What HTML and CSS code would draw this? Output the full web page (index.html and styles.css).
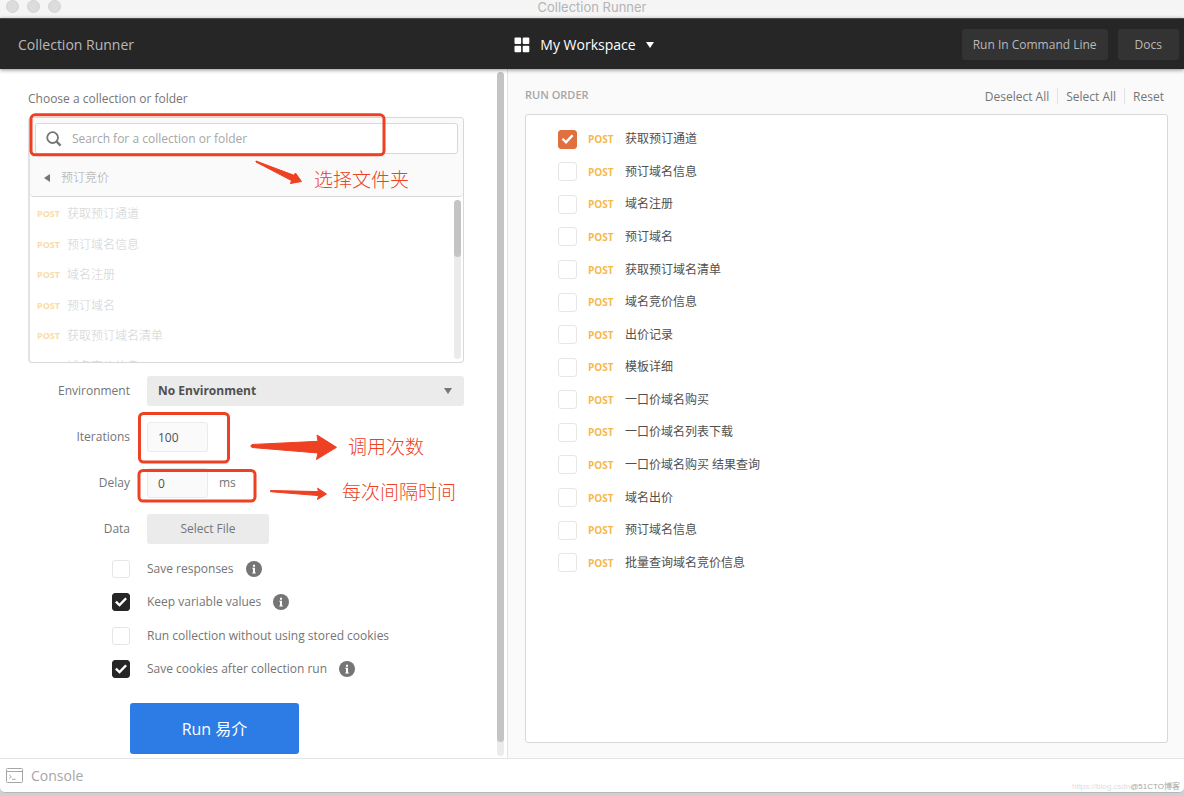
FILE: index.html
```html
<!DOCTYPE html>
<html lang="zh-CN">
<head>
<meta charset="utf-8">
<title>Collection Runner</title>
<link rel="stylesheet" href="styles.css">
</head>
<body>
<div class="window">
  <div class="titlebar">
    <div class="lights"><i></i><i></i><i></i></div>
    <span>Collection Runner</span>
  </div>
  <header class="header">
    <h1 class="header-title">Collection Runner</h1>
    <button class="workspace" type="button">
      <svg width="16" height="16" viewBox="0 0 16 16" fill="#fff"><rect x="0.5" y="0.5" width="6.6" height="6.6" rx="1"/><rect x="8.7" y="0.5" width="6.6" height="6.6" rx="1"/><rect x="0.5" y="8.7" width="6.6" height="6.6" rx="1"/><rect x="8.7" y="8.7" width="6.6" height="6.6" rx="1"/></svg>
      <span>My Workspace</span>
      <svg width="8" height="6" viewBox="0 0 8 6" fill="#fff"><path d="M0 0h8L4 6z"/></svg>
    </button>
    <div class="header-actions">
      <button class="dark-btn" type="button">Run In Command Line</button>
      <button class="dark-btn docs" type="button">Docs</button>
    </div>
  </header>

  <main class="main">
    <section class="config">
      <form class="config-body">
        <label class="choose" for="search">Choose a collection or folder</label>
        <div class="picker">
          <div class="picker-head">
            <div class="search">
              <svg width="16" height="16" viewBox="0 0 16 16" fill="none" stroke="#757575" stroke-width="1.8"><circle cx="6.6" cy="6.6" r="5.4"/><path d="M10.6 10.6 14.6 14.6" stroke-width="2.2"/></svg>
              <input id="search" type="text" placeholder="Search for a collection or folder">
            </div>
            <button class="crumb" type="button">
              <svg width="6" height="8" viewBox="0 0 6 8" fill="#757575"><path d="M6 0v8L0 4z"/></svg>
              <span>预订竞价</span>
            </button>
          </div>
          <div class="picker-list">
            <ul class="requests">
              <li><b>POST</b>获取预订通道</li>
              <li><b>POST</b>预订域名信息</li>
              <li><b>POST</b>域名注册</li>
              <li><b>POST</b>预订域名</li>
              <li><b>POST</b>获取预订域名清单</li>
              <li><b>POST</b>域名竞价信息</li>
            </ul>
            <div class="track inner"><div class="thumb"></div></div>
          </div>
        </div>

        <div class="fields">
          <label for="env">Environment</label>
          <div class="select">
            <select id="env"><option>No Environment</option></select>
            <svg width="8" height="6" viewBox="0 0 8 6" fill="#757575"><path d="M0 0h8L4 6z"/></svg>
          </div>
          <label for="iter">Iterations</label>
          <div><input class="num" id="iter" type="text" value="100"></div>
          <label for="delay">Delay</label>
          <div class="with-unit"><input class="num" id="delay" type="text" value="0"><span>ms</span></div>
          <label for="file">Data</label>
          <div><button class="file" id="file" type="button">Select File</button></div>
        </div>

        <div class="options">
          <div class="option"><input class="check" type="checkbox" id="o1"><label for="o1">Save responses</label>
            <svg class="info" width="16" height="16" viewBox="0 0 16 16"><circle cx="8" cy="8" r="8" fill="#757575"/><path d="M7 3.8h2v2H7zM6.3 6.8H9v4.6h.8v1H6.3v-1H7V7.8h-.7z" fill="#fff"/></svg></div>
          <div class="option"><input class="check" type="checkbox" id="o2" checked><label for="o2">Keep variable values</label>
            <svg class="info" width="16" height="16" viewBox="0 0 16 16"><circle cx="8" cy="8" r="8" fill="#757575"/><path d="M7 3.8h2v2H7zM6.3 6.8H9v4.6h.8v1H6.3v-1H7V7.8h-.7z" fill="#fff"/></svg></div>
          <div class="option"><input class="check" type="checkbox" id="o3"><label for="o3">Run collection without using stored cookies</label></div>
          <div class="option"><input class="check" type="checkbox" id="o4" checked><label for="o4">Save cookies after collection run</label>
            <svg class="info" width="16" height="16" viewBox="0 0 16 16"><circle cx="8" cy="8" r="8" fill="#757575"/><path d="M7 3.8h2v2H7zM6.3 6.8H9v4.6h.8v1H6.3v-1H7V7.8h-.7z" fill="#fff"/></svg></div>
        </div>
        <button class="run" type="button">Run 易介</button>
      </form>
      <div class="track outer"><div class="thumb"></div></div>
    </section>

    <section class="order">
      <div class="order-head">
        <h2>RUN ORDER</h2>
        <nav class="order-links">
          <a href="#">Deselect All</a><a href="#">Select All</a><a href="#">Reset</a>
        </nav>
      </div>
      <div class="order-box">
        <ul class="order-list">
          <li><input class="check orange" type="checkbox" id="r1" checked><b>POST</b><label for="r1">获取预订通道</label></li>
          <li><input class="check orange" type="checkbox" id="r2"><b>POST</b><label for="r2">预订域名信息</label></li>
          <li><input class="check orange" type="checkbox" id="r3"><b>POST</b><label for="r3">域名注册</label></li>
          <li><input class="check orange" type="checkbox" id="r4"><b>POST</b><label for="r4">预订域名</label></li>
          <li><input class="check orange" type="checkbox" id="r5"><b>POST</b><label for="r5">获取预订域名清单</label></li>
          <li><input class="check orange" type="checkbox" id="r6"><b>POST</b><label for="r6">域名竞价信息</label></li>
          <li><input class="check orange" type="checkbox" id="r7"><b>POST</b><label for="r7">出价记录</label></li>
          <li><input class="check orange" type="checkbox" id="r8"><b>POST</b><label for="r8">模板详细</label></li>
          <li><input class="check orange" type="checkbox" id="r9"><b>POST</b><label for="r9">一口价域名购买</label></li>
          <li><input class="check orange" type="checkbox" id="r10"><b>POST</b><label for="r10">一口价域名列表下载</label></li>
          <li><input class="check orange" type="checkbox" id="r11"><b>POST</b><label for="r11">一口价域名购买 结果查询</label></li>
          <li><input class="check orange" type="checkbox" id="r12"><b>POST</b><label for="r12">域名出价</label></li>
          <li><input class="check orange" type="checkbox" id="r13"><b>POST</b><label for="r13">预订域名信息</label></li>
          <li><input class="check orange" type="checkbox" id="r14"><b>POST</b><label for="r14">批量查询域名竞价信息</label></li>
        </ul>
      </div>
    </section>
  </main>

  <footer class="console">
    <svg width="17" height="15" viewBox="0 0 17 15" fill="none" stroke="#a6a6a6"><rect x="0.5" y="0.5" width="16" height="14" rx="1"/><path d="M.5 3.5h16M3.3 7l2 1.7-2 1.7M6 11.3h3.5"/></svg>
    <span>Console</span>
  </footer>
</div>

<svg class="marks" width="480" height="520" viewBox="0 0 480 520">
  <g fill="none" stroke="#ee4023" stroke-width="3">
    <rect x="31" y="114.8" width="353" height="40" rx="4"/>
    <rect x="139.5" y="413.5" width="89" height="48.500" rx="4"/>
    <rect x="139" y="470.500" width="116" height="30.500" rx="4"/>
  </g>
  <g fill="#ee4023" stroke="#ee4023" stroke-width="1" stroke-linejoin="round">
    <path d="M256 161 294 175.300 295.500 173 301.500 181.500 290.500 183.500 291.500 180.500 256 162z"/>
    <path d="M252 444.500 318 441.300 317 435 336.500 447.300 316.500 459.500 318 453 252 447.500Q249.500 446 252 444.500z"/>
    <path d="M270.500 490.500 318.500 491.600 317.600 488.200 326.500 494 317.500 499.500 318.500 495.600 270.500 491.700z"/>
  </g>
</svg>
<span class="note note-folder">选择文件夹</span>
<span class="note note-count">调用次数</span>
<span class="note note-delay">每次间隔时间</span>
<span class="watermark"><span>https://blog.csdn</span>@51CTO博客</span>
</body>
</html>
```
FILE: styles.css
```css
* { box-sizing: border-box; }
body {
  margin: 0;
  position: relative;
  min-height: 100vh;
  background: #d0d0d0;
  color: #757575;
  font: 12px/18px "Open Sans", "Noto Sans CJK SC", sans-serif;
}
button, input, select { font: inherit; color: inherit; margin: 0; border: 0; }
ul { list-style: none; margin: 0; padding: 0; }
svg { flex: none; display: block; }

.window {
  display: flex;
  flex-direction: column;
  min-height: calc(100vh - 4px);
  background: #fff;
  border-radius: 0 0 5px 5px;
  border-bottom: 1px solid #b8b8b8;
}

.titlebar {
  display: grid;
  grid-template-columns: 1fr auto 1fr;
  height: 18px;
  background: #f5f5f5;
  color: #b4b4b4;
  font: 13px/15px Inter, sans-serif;
}
.lights { display: flex; gap: 8px; padding-left: 6px; }
.lights i { width: 13px; height: 13px; border-radius: 50%; background: #dcdcdc; border: 1px solid #d2d2d2; }

.header {
  position: relative;
  display: grid;
  grid-template-columns: 1fr auto 1fr;
  align-items: center;
  height: 51px;
  padding: 1px 5px 0 18px;
  background: #262626;
  border-top: 1px solid #4a4a4a;
  box-shadow: 0 1px 4px rgba(0, 0, 0, 0.45);
  font-size: 14px;
}
.header-title { margin: 0; font-size: 14px; font-weight: 400; color: #b9b9b9; }
.workspace { display: flex; align-items: center; gap: 10px; padding: 0 29px 0 0; background: none; color: #fff; font-weight: 500; }
.header-actions { display: flex; justify-content: flex-end; gap: 10px; }
.dark-btn { height: 31px; padding: 0 11px; border-radius: 3px; background: #333; color: #b9b9b9; font-size: 12px; }
.docs { padding: 0 17px; }

.main { display: flex; flex: 1; }

.config { display: flex; flex: 0 0 508px; padding-right: 3px; border-right: 1px solid #e4e4e4; }
.config-body { flex: 1; display: flex; flex-direction: column; padding: 21px 33px 4px 28px; }
.choose { margin-bottom: 9px; }
.picker { border: 1px solid #d8d8d8; border-left: 2px solid #e2e2e2; border-radius: 4px; overflow: hidden; }
.picker-head { padding: 5px 5px 0; background: #fafafa; border-bottom: 1px solid #d8d8d8; border-radius: 0 0 4px 4px; }
.search { display: flex; align-items: center; gap: 10px; height: 31px; padding: 0 10px; background: #fff; border: 1px solid #d8d8d8; border-radius: 3px; }
.search input { flex: 1; min-width: 0; padding: 0; background: none; outline: 0; }
.search input::placeholder { color: #a6a6a6; opacity: 1; }
.crumb { display: flex; align-items: center; gap: 11px; height: 42px; padding: 6px 9px 0; background: none; color: #a6a6a6; font-weight: 300; }
.picker-list { display: flex; justify-content: space-between; height: 165px; padding-right: 2px; overflow: hidden; }
.requests { display: grid; grid-auto-rows: 1fr; height: 185px; padding-top: 2px; color: #d0d0d0; font-weight: 300; }
.requests li { display: flex; align-items: center; padding-left: 7px; }
.requests b { width: 30px; color: #fbdba5; font-size: 9px; font-weight: 700; }

.track { width: 7px; border-radius: 4px; background: #ebebeb; }
.thumb { border-radius: 4px; background: #c4c4c4; }
.inner { margin: 3px 0; }
.inner .thumb { height: 57px; }
.outer { margin: 3px 0 2px; }
.outer .thumb { height: 98%; }

.fields { display: grid; grid-template-columns: 102px 1fr; grid-auto-rows: 30px; gap: 16px 17px; align-items: center; margin-top: 13px; }
.fields > label { text-align: right; }
.select { display: flex; align-items: center; height: 30px; padding-right: 12px; background: #ebebeb; border-radius: 3px; }
.select select { flex: 1; height: 30px; padding: 0 11px; appearance: none; background: none; color: #505050; font-weight: 700; }
.num { display: block; width: 61px; height: 30px; padding: 0 10px; border: 1px solid #ebebeb; border-radius: 3px; background: #fafafa; color: #505050; }
.with-unit { display: flex; align-items: center; gap: 11px; }
.file { display: block; width: 122px; height: 30px; border-radius: 3px; background: #ebebeb; }

.options { display: grid; grid-auto-rows: 1fr; height: 134px; margin: 8px 0 17px 84px; }
.option { display: flex; align-items: center; }
.option label { margin: 0 12px 0 17px; }
.check { appearance: none; flex: none; width: 18px; height: 18px; border: 1px solid #e6e6e6; border-radius: 3px; background: #fff; display: grid; place-items: center; }
.check:checked { background: #262626; border-color: #262626; }
.check:checked::before {
  content: "";
  width: 12px;
  height: 10px;
  background: #fff;
  clip-path: polygon(0 52%, 15% 36%, 37% 62%, 85% 2%, 100% 18%, 38% 96%);
}
.orange { width: 19px; height: 19px; }
.orange:checked { background: #e0703f; border-color: #e0703f; }

.run { align-self: flex-start; width: 169px; height: 51px; margin-left: 102px; border-radius: 3px; background: #2d7be5; color: #fff; font-size: 16px; }

.order { flex: 1; display: flex; flex-direction: column; padding: 17px 16px 15px 17px; background: #fafafa; }
.order-head { display: flex; justify-content: space-between; height: 28px; }
.order-head h2 { margin: 0; color: #a6a6a6; font-size: 11px; line-height: 17px; font-weight: 600; }
.order-links { display: flex; height: 16px; margin-top: 2px; }
.order-links a { padding: 0 8px; color: inherit; text-decoration: none; line-height: 18px; border-left: 1px solid #e2e2e2; }
.order-links a:first-child { border: 0; }
.order-links a:last-child { padding-right: 4px; }
.order-box { flex: 1; padding: 8px 32px; background: #fff; border: 1px solid #d8d8d8; border-radius: 3px; }
.order-list { display: grid; grid-auto-rows: 1fr; height: 456px; color: #505050; }
.order-list li { display: flex; align-items: center; }
.order-list b { width: 37px; margin-left: 11px; color: #f5b94d; font-size: 10px; font-weight: 700; }

.console { display: flex; align-items: center; gap: 8px; height: 34px; padding: 0 6px; border-top: 1px solid #e4e4e4; color: #a6a6a6; font-size: 14px; }

/* Annotations drawn over the window */
.marks { position: absolute; left: 0; top: 0; pointer-events: none; }
.note { position: absolute; color: #ee4023; font: 300 19px/24px "Noto Sans CJK SC", sans-serif; white-space: nowrap; }
.note-folder { left: 314px; top: 167px; }
.note-count { left: 348px; top: 434px; }
.note-delay { left: 342px; top: 479px; }
.watermark { position: absolute; right: 4px; bottom: 2px; color: #a6a6a6; font: 8px/14px "Liberation Sans", "Noto Sans CJK SC", sans-serif; }
.watermark span { color: #dedede; }
```
